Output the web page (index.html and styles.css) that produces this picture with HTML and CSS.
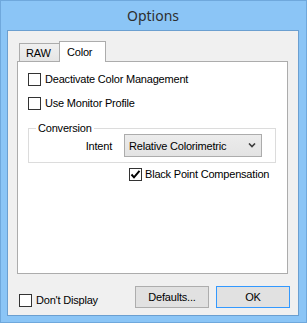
FILE: index.html
```html
<!DOCTYPE html>
<html lang="en">
  <head>
    <meta charset="UTF-8" />
    <meta name="viewport" content="width=device-width, initial-scale=1.0" />
    <title>Options</title>
    <link rel="stylesheet" href="styles.css">
  </head>
  <body>
    <div class="window">
      <div class="title">Options</div>

      <div class="client">
        <!-- tab header -->
        <div class="tabs">
          <div class="tab">RAW</div>
          <div class="tab active">Color</div>
        </div>

        <div class="panel">
          <label class="check">
            <span class="box"></span>
            <span>Deactivate Color Management</span>
          </label>
          <label class="check">
            <span class="box"></span>
            <span>Use Monitor Profile</span>
          </label>

          <fieldset class="group">
            <legend>Conversion</legend>
            <div class="field">
              <span class="field-label">Intent</span>
              <div class="select">
                <span>Relative Colorimetric</span>
                <svg width="8" height="5" viewBox="0 0 8 5">
                  <path d="M1 0.5 L4 3.5 L7 0.5" fill="none" stroke="#3c3c3c" stroke-width="1.6" />
                </svg>
              </div>
            </div>
          </fieldset>

          <label class="check check-bpc">
            <span class="box">
              <svg width="11" height="11" viewBox="0 0 11 11">
                <path d="M1.5 5.5 L4 8.3 L9.5 1.8" fill="none" stroke="#000" stroke-width="2" />
              </svg>
            </span>
            <span>Black Point Compensation</span>
          </label>
        </div>

        <div class="bottom">
          <label class="check check-dont">
            <span class="box"></span>
            <span>Don't Display</span>
          </label>
          <button class="btn">Defaults...</button>
          <button class="btn btn-default">OK</button>
        </div>
      </div>
    </div>
  </body>
</html>
```

FILE: styles.css
```css
* {
  padding: 0;
  margin: 0;
  box-sizing: border-box;
}

body {
  background-color: #8bc5f6;
  font-family: "Liberation Sans", Arial, sans-serif;
  font-size: 11px;
  letter-spacing: -0.2px;
  color: #000;
}

.window {
  width: 307px;
  height: 323px;
  border: 1px solid #6fa8dc;
  background-color: #8bc5f6;
  padding: 0 7px 6px 6px;
  display: flex;
  flex-direction: column;
}

.title {
  height: 29px;
  display: flex;
  align-items: center;
  justify-content: center;
  font-family: "Noto Sans", "Open Sans", sans-serif;
  font-size: 14px;
  letter-spacing: 0;
  color: #2e2e2e;
  padding-bottom: 1px;
}

.client {
  height: 286px;
  border: 1px solid #6b9fd0;
  background-color: #f0f0f0;
  padding: 10px 8px 0 9px;
  display: flex;
  flex-direction: column;
}

/* tabs */
.tabs {
  height: 20px;
  display: flex;
  align-items: flex-end;
  padding-left: 2px;
}

.tab {
  width: 41px;
  height: 18px;
  border: 1px solid #acacac;
  border-bottom: none;
  background: linear-gradient(#f0f0f0, #e5e5e5);
  padding: 3px 0 0 6px;
  line-height: 13px;
}

.tab.active {
  width: 47px;
  height: 21px;
  margin-left: -1px;
  margin-bottom: -1px;
  background: #fff;
  padding: 4px 0 0 7px;
  position: relative;
  z-index: 1;
}

.panel {
  width: 271px;
  height: 213px;
  border: 1px solid #acacac;
  background-color: #fff;
  padding: 11px 0 0 10px;
  display: flex;
  flex-direction: column;
}

/* checkboxes */
.check {
  display: flex;
  align-items: center;
  gap: 4px;
  height: 13px;
  line-height: 13px;
  white-space: nowrap;
}

.check + .check {
  margin-top: 11px;
}

.box {
  width: 13px;
  height: 13px;
  border: 1px solid #333;
  background-color: #fff;
  display: flex;
  align-items: center;
  justify-content: center;
  flex-shrink: 0;
}

/* group box */
.group {
  width: 248px;
  margin-top: 12px;
  border: 1px solid #dcdcdc;
  padding: 0 13px 5px 0;
}

.group legend {
  margin-left: 7px;
  padding: 0 2px;
  line-height: 12px;
}

.field {
  display: flex;
  align-items: center;
  justify-content: flex-end;
  gap: 12px;
}

.select {
  width: 138px;
  height: 23px;
  border: 1px solid #acacac;
  background: linear-gradient(#ececec, #e3e3e3);
  display: flex;
  align-items: center;
  justify-content: space-between;
  padding: 0 5px 0 4px;
}

.check-bpc {
  margin-top: 5px;
  margin-left: 101px;
  gap: 3px;
}

/* bottom bar */
.bottom {
  margin-top: 12px;
  height: 22px;
  display: flex;
  align-items: center;
  gap: 7px;
  padding-left: 2px;
}

.check-dont {
  margin-top: 6px;
  margin-right: auto;
}

.btn {
  width: 74px;
  height: 22px;
  border: 1px solid #adadad;
  background-color: #e1e1e1;
  font-family: "Liberation Sans", Arial, sans-serif;
  font-size: 11px;
  letter-spacing: -0.2px;
  color: #000;
}

.btn-default {
  border-color: #3399ff;
}
```
